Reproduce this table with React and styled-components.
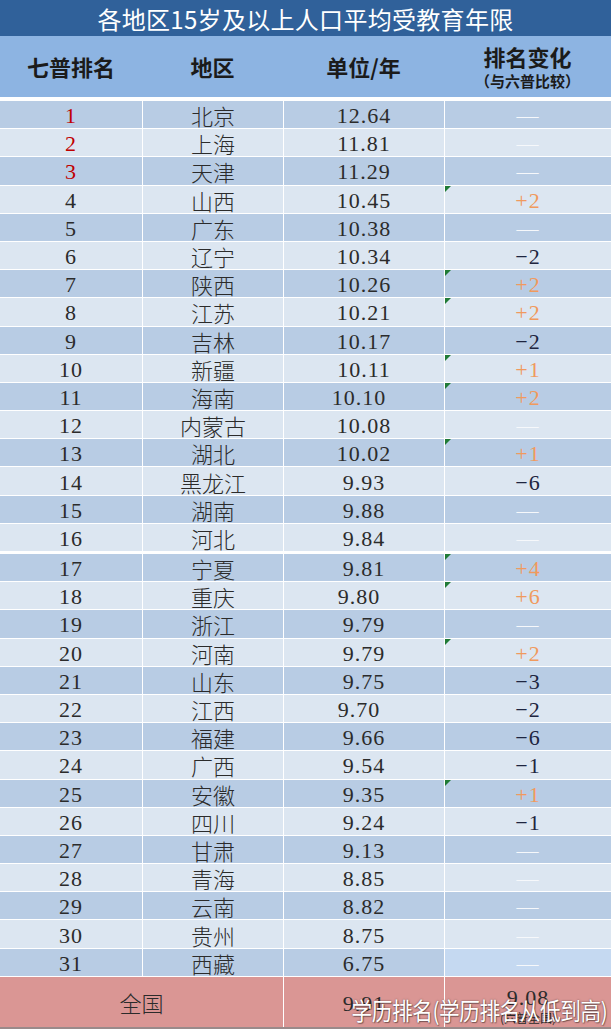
import React from 'react';
import styled, { createGlobalStyle } from 'styled-components';

const rows = [
  ['北京', '12.64', '—'],
  ['上海', '11.81', '—'],
  ['天津', '11.29', '—'],
  ['山西', '10.45', '+2'],
  ['广东', '10.38', '—'],
  ['辽宁', '10.34', '-2'],
  ['陕西', '10.26', '+2'],
  ['江苏', '10.21', '+2'],
  ['吉林', '10.17', '-2'],
  ['新疆', '10.11', '+1'],
  ['海南', '10.10', '+2', 5],
  ['内蒙古', '10.08', '—'],
  ['湖北', '10.02', '+1'],
  ['黑龙江', '9.93', '-6'],
  ['湖南', '9.88', '—'],
  ['河北', '9.84', '—'],
  ['宁夏', '9.81', '+4'],
  ['重庆', '9.80', '+6', 5],
  ['浙江', '9.79', '—'],
  ['河南', '9.79', '+2'],
  ['山东', '9.75', '-3'],
  ['江西', '9.70', '-2', 5],
  ['福建', '9.66', '-6'],
  ['广西', '9.54', '-1'],
  ['安徽', '9.35', '+1'],
  ['四川', '9.24', '-1'],
  ['甘肃', '9.13', '—'],
  ['青海', '8.85', '—'],
  ['云南', '8.82', '—'],
  ['贵州', '8.75', '—'],
  ['西藏', '6.75', '—'],
];

const GlobalStyle = createGlobalStyle`
  html, body {
    margin: 0;
    padding: 0;
    background: #ffffff;
  }
  body {
    font-family: "Noto Sans CJK SC", sans-serif;
  }
`;

const Sheet = styled.div`
  position: relative;
  width: 611px;
  overflow: hidden;
`;

const Title = styled.div`
  height: 36px;
  background: #30619a;
  color: #ffffff;
  font-size: 24px;
  font-weight: 400;
  display: flex;
  align-items: center;
  justify-content: center;
  letter-spacing: 0.3px;
`;

const HeadRow = styled.div`
  height: 61px;
  background: #8db4e2;
  display: grid;
  grid-template-columns: 142px 141px 161px 1fr;
  border-bottom: 4px solid #ffffff;
`;

const HeadCell = styled.div`
  display: flex;
  flex-direction: column;
  align-items: center;
  justify-content: center;
  color: #1b1b1b;
  font-size: 22px;
  font-weight: 700;
  line-height: 1.15;
`;

const HeadNote = styled.span`
  font-size: 15px;
  font-weight: 700;
  margin-top: 2px;
`;

const Body = styled.div`
  display: flex;
  flex-direction: column;
  gap: 1px;
  background: #ffffff;
`;

const Row = styled.div`
  height: 27.19px;
  display: grid;
  grid-template-columns: 142px 140px 160px 1fr;
  column-gap: 1px;
  background: #ffffff;
  margin-top: ${(p) => (p.$split ? '2px' : '0')};
`;

const Cell = styled.div`
  position: relative;
  display: flex;
  align-items: center;
  justify-content: center;
  background: ${(p) => p.$bg};
  color: ${(p) => p.$color || '#2b2b2b'};
  font-family: ${(p) =>
    p.$num ? '"Liberation Serif", "Noto Sans CJK SC", serif' : '"Noto Sans CJK SC", sans-serif'};
  font-size: 22px;
  font-weight: ${(p) => (p.$num ? 400 : 300)};
  letter-spacing: ${(p) => (p.$num ? '1px' : '0')};
  line-height: 1;
  padding-top: ${(p) => (p.$num ? '3px' : '1px')};
  padding-right: ${(p) => (p.$shift ? `${p.$shift * 2}px` : '0')};
`;

const Marker = styled.span`
  position: absolute;
  top: 0;
  left: 0;
  width: 0;
  height: 0;
  border-top: 6px solid #1f7a36;
  border-right: 6px solid transparent;
`;

const Footer = styled.div`
  margin-top: 1px;
  height: 50px;
  display: grid;
  grid-template-columns: 283px 160px 1fr;
  column-gap: 1px;
  background: #ffffff;
  border-bottom: 2px solid #9a8a8a;
`;

const FootCell = styled.div`
  background: #da9694;
  display: flex;
  flex-direction: column;
  align-items: center;
  justify-content: ${(p) => (p.$top ? 'flex-start' : 'center')};
  padding-top: ${(p) => (p.$top ? '10px' : p.$num ? '4px' : '0')};
  color: #2b2b2b;
  font-family: ${(p) =>
    p.$num ? '"Liberation Serif", "Noto Sans CJK SC", serif' : '"Noto Sans CJK SC", sans-serif'};
  font-size: 22px;
  font-weight: ${(p) => (p.$num ? 400 : 300)};
  letter-spacing: ${(p) => (p.$num ? '1px' : '0')};
  line-height: 1;
`;

const FootNote = styled.span`
  font-family: "Noto Sans CJK SC", sans-serif;
  font-size: 12px;
  letter-spacing: 0;
  margin-top: 3px;
`;

const Watermark = styled.div`
  position: absolute;
  right: 4px;
  bottom: 2px;
  color: #ffffff;
  font-family: "Noto Sans CJK SC", sans-serif;
  font-size: 24px;
  letter-spacing: -0.5px;
  transform: scaleX(0.86);
  transform-origin: right bottom;
  text-shadow: 0 0 2px rgba(0, 0, 0, 0.55), 1px 1px 1px rgba(0, 0, 0, 0.35);
  white-space: nowrap;
`;

const changeColor = (c) => {
  if (c === '—') return '#f6f8fb';
  if (c.startsWith('+')) return '#f09a5e';
  return '#1e2540';
};

const App = () => {
  return (
    <Sheet>
      <GlobalStyle />
      <Title>各地区15岁及以上人口平均受教育年限</Title>
      <HeadRow>
        <HeadCell>七普排名</HeadCell>
        <HeadCell>地区</HeadCell>
        <HeadCell>单位/年</HeadCell>
        <HeadCell>
          排名变化
          <HeadNote>（与六普比较）</HeadNote>
        </HeadCell>
      </HeadRow>
      <Body>
        {rows.map(([area, years, change, shift], i) => {
          const rank = i + 1;
          const bg = i % 2 === 0 ? '#b8cce4' : '#dce6f1';
          const lastBg = rank === 31 ? '#c5d9f1' : bg;
          return (
            <Row key={area} $split={rank === 17}>
              <Cell $bg={bg} $num $color={rank <= 3 ? '#c00000' : undefined}>
                {rank}
              </Cell>
              <Cell $bg={bg}>{area}</Cell>
              <Cell $bg={bg} $num $shift={shift}>
                {years}
              </Cell>
              <Cell $bg={lastBg} $num $color={changeColor(change)}>
                {change.startsWith('+') && <Marker />}
                {change.replace('-', '−')}
              </Cell>
            </Row>
          );
        })}
      </Body>
      <Footer>
        <FootCell>全国</FootCell>
        <FootCell $num>9.91</FootCell>
        <FootCell $num $top>
          9.08
          <FootNote>(六普全国)</FootNote>
        </FootCell>
      </Footer>
      <Watermark>学历排名(学历排名从低到高)</Watermark>
    </Sheet>
  );
};

export default App;
